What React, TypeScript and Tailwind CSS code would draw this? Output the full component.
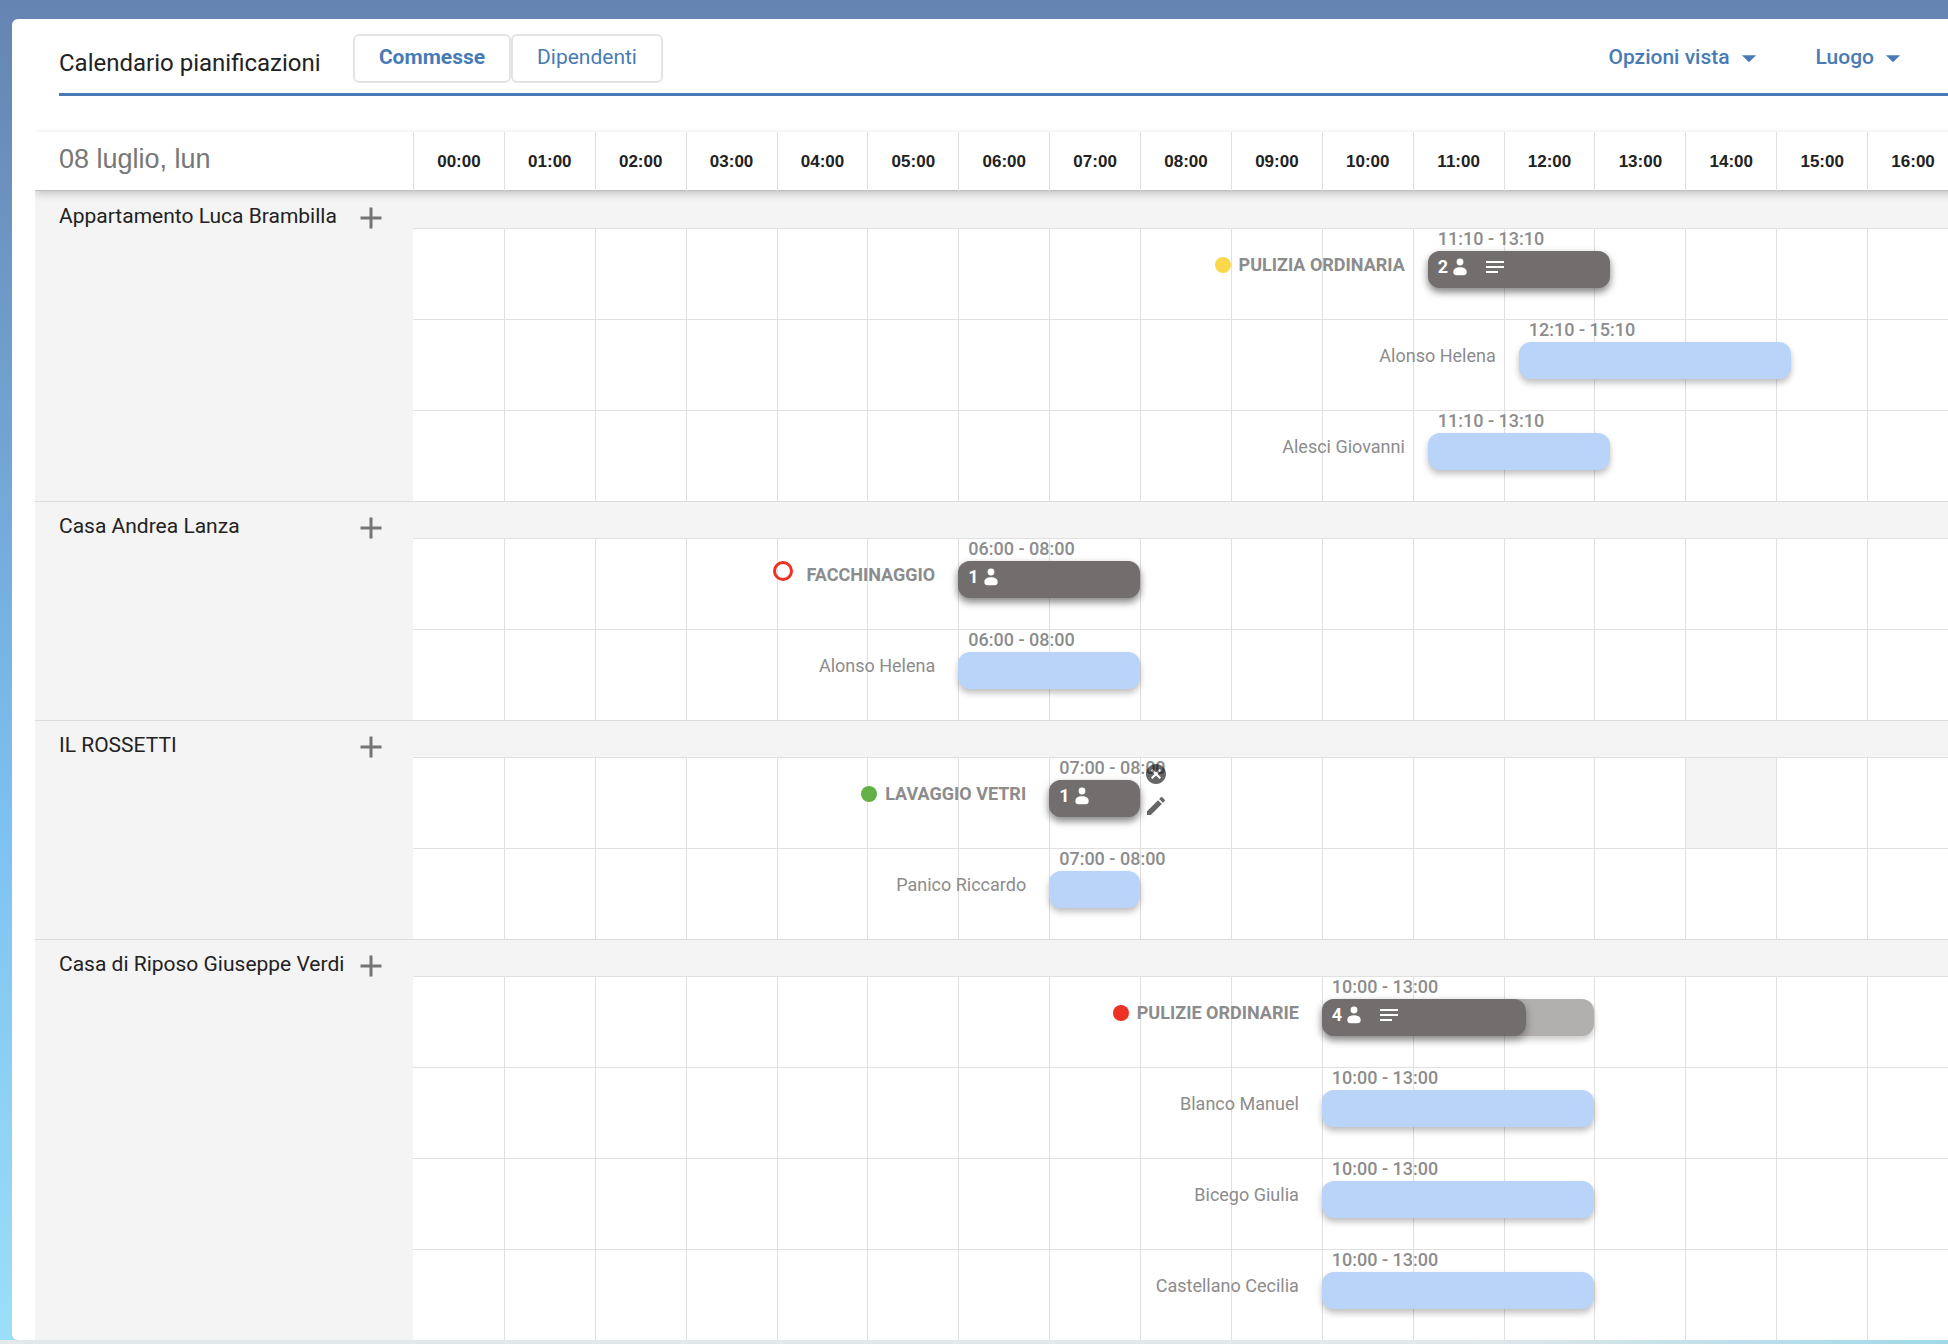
import React from 'react'
import clsx from 'clsx'
import { MdAdd, MdArrowDropDown, MdCancel, MdEdit, MdNotes } from 'react-icons/md'

type Status = 'yellow' | 'green' | 'red' | 'open'

type Shift = {
  label: string
  start: string
  end: string
  status?: Status
  people?: number
  notes?: boolean
  progress?: number
  editable?: boolean
  shadedHour?: number
}

type Site = {
  name: string
  shifts: Shift[]
}

const HOURS = Array.from({ length: 17 }, (_, i) => i)

const SITES: Site[] = [
  {
    name: 'Appartamento Luca Brambilla',
    shifts: [
      { label: 'PULIZIA ORDINARIA', start: '11:10', end: '13:10', status: 'yellow', people: 2, notes: true },
      { label: 'Alonso Helena', start: '12:10', end: '15:10' },
      { label: 'Alesci Giovanni', start: '11:10', end: '13:10' },
    ],
  },
  {
    name: 'Casa Andrea Lanza',
    shifts: [
      { label: 'FACCHINAGGIO', start: '06:00', end: '08:00', status: 'open', people: 1 },
      { label: 'Alonso Helena', start: '06:00', end: '08:00' },
    ],
  },
  {
    name: 'IL ROSSETTI',
    shifts: [
      { label: 'LAVAGGIO VETRI', start: '07:00', end: '08:00', status: 'green', people: 1, editable: true, shadedHour: 14 },
      { label: 'Panico Riccardo', start: '07:00', end: '08:00' },
    ],
  },
  {
    name: 'Casa di Riposo Giuseppe Verdi',
    shifts: [
      { label: 'PULIZIE ORDINARIE', start: '10:00', end: '13:00', status: 'red', people: 4, notes: true, progress: 75 },
      { label: 'Blanco Manuel', start: '10:00', end: '13:00' },
      { label: 'Bicego Giulia', start: '10:00', end: '13:00' },
      { label: 'Castellano Cecilia', start: '10:00', end: '13:00' },
    ],
  },
]

const DOTS: Record<Status, string> = {
  yellow: 'size-4 mr-2 bg-[#fad74b]',
  green: 'size-4 mr-2 bg-[#62b046]',
  red: 'size-4 mr-2 bg-[#eb3223]',
  open: 'size-5 mr-3.5 mb-2 border-[3px] border-[#eb3223]',
}

const toHours = (time: string) => {
  const [h, m] = time.split(':').map(Number)
  return h + m / 60
}

const percent = (hours: number) => `${(hours / HOURS.length) * 100}%`

function PersonIcon() {
  return (
    <svg viewBox="0 0 14 18" className="w-3.5 h-[18px]" fill="currentColor" aria-hidden="true">
      <circle cx="7" cy="4" r="3.4" />
      <path d="M0.3 14C0.3 11 2.8 9.2 7 9.2s6.7 1.8 6.7 4.8c0 2.3-1.3 3.2-3.3 3.2H3.6C1.6 17.2 0.3 16.3 0.3 14z" />
    </svg>
  )
}

function ShiftBar({ shift }: { shift: Shift }) {
  if (!shift.people) {
    return <div className="h-[37px] rounded-xl bg-[#b9d3f9] shadow-[0_4px_6px_rgba(0,0,0,0.25)]" />
  }

  return (
    <div className="h-[37px] rounded-xl bg-[#b2b0ae] shadow-[0_4px_6px_rgba(0,0,0,0.2)]">
      <div
        className="flex h-full items-start rounded-xl bg-[#726e6d] pl-2.5 pt-1 text-lg leading-6 font-bold text-white shadow-[0_4px_8px_rgba(0,0,0,0.35)]"
        style={{ width: `${shift.progress ?? 100}%` }}
      >
        {shift.people}
        <span className="ml-[5px] mt-[3px]">
          <PersonIcon />
        </span>
        {shift.notes && <MdNotes className="ml-4 size-6" />}
      </div>
    </div>
  )
}

function ShiftRow({ shift }: { shift: Shift }) {
  const start = toHours(shift.start)
  const end = toHours(shift.end)

  return (
    <div className="relative h-[91px] border-t border-[#e0e0e0]">
      <div className="grid h-full grid-cols-17">
        {HOURS.map((hour) => (
          <div
            key={hour}
            className={clsx(hour > 0 && 'border-l border-[#e0e0e0]', hour === shift.shadedHour && 'bg-[#f4f4f4]')}
          />
        ))}
      </div>
      <div className="absolute inset-0 flex text-lg text-[#8c8c8c]">
        <div className="flex shrink-0 justify-end pt-6 pr-[23px]" style={{ width: percent(start) }}>
          <div className="flex h-6 items-center whitespace-nowrap leading-6">
            {shift.status && <span className={clsx('rounded-full', DOTS[shift.status])} />}
            <span className={clsx(shift.status && 'font-bold')}>{shift.label}</span>
          </div>
        </div>
        <div className="shrink-0" style={{ width: percent(end - start) }}>
          <div className="h-[22px] pl-2.5 leading-5 font-medium whitespace-nowrap">
            {shift.start} - {shift.end}
          </div>
          <ShiftBar shift={shift} />
        </div>
        {shift.editable && (
          <div className="flex flex-col gap-2 pt-1 pl-1 text-black/60">
            <button type="button" aria-label="Elimina">
              <MdCancel className="size-6" />
            </button>
            <button type="button" aria-label="Modifica">
              <MdEdit className="size-6" />
            </button>
          </div>
        )}
      </div>
    </div>
  )
}

function SiteGroup({ site, first }: { site: Site; first: boolean }) {
  return (
    <section className={clsx('flex border-t bg-[#f4f4f4]', first ? 'border-transparent' : 'border-[#dcdcdc]')}>
      <div className="flex w-[378px] shrink-0 items-start pl-6">
        <h2 className="w-[294px] whitespace-nowrap pt-3 text-[21px] leading-6 text-[#222]">{site.name}</h2>
        <button type="button" aria-label="Aggiungi" className="pt-2 text-[#757575]">
          <MdAdd className="size-9" />
        </button>
      </div>
      <div className="min-w-0 flex-1 pt-9">
        <div className="bg-white">
          {site.shifts.map((shift) => (
            <ShiftRow key={shift.label} shift={shift} />
          ))}
        </div>
      </div>
    </section>
  )
}

function Header() {
  return (
    <header className="ml-6 flex items-center border-b-[3px] border-[#487bb5] pt-[15px] pb-2.5 text-[21px] text-[#487bb5]">
      <h1 className="w-[294px] pt-2 text-2xl text-[#222]">Calendario pianificazioni</h1>
      <div className="flex">
        <button type="button" className="h-[49px] w-[158px] rounded-md border-2 border-[#e4e4e4] pb-0.5 font-bold">
          Commesse
        </button>
        <button type="button" className="h-[49px] w-[152px] rounded-md border-2 border-[#e4e4e4] pb-0.5">
          Dipendenti
        </button>
      </div>
      <nav className="mr-12 ml-auto flex gap-[50px] pb-0.5 font-medium">
        <button type="button" className="flex items-center">
          Opzioni vista
          <MdArrowDropDown className="ml-0.5 size-[34px]" />
        </button>
        <button type="button" className="flex items-center">
          Luogo
          <MdArrowDropDown className="ml-0.5 size-[34px]" />
        </button>
      </nav>
    </header>
  )
}

function HourHeader() {
  return (
    <div className="relative z-10 flex h-[59px] border-b border-[#bdbdbd] bg-white font-['Liberation_Sans',sans-serif] shadow-[0_3px_8px_rgba(0,0,0,0.2)]">
      <div className="w-[378px] shrink-0 pl-6 text-[27px] leading-[54px] text-[#777]">08 luglio, lun</div>
      <div className="grid flex-1 grid-cols-17">
        {HOURS.map((hour) => (
          <div
            key={hour}
            className="border-l border-[#e0e0e0] text-center text-[17px] leading-[59px] font-bold text-[#222]"
          >
            {String(hour).padStart(2, '0')}:00
          </div>
        ))}
      </div>
    </div>
  )
}

export default function App() {
  return (
    <div className="min-h-screen overflow-hidden bg-linear-to-b from-[#6584b1] via-[#7cc0f0] via-60% to-[#9cdff8] pt-[19px] pl-3 font-[Roboto,sans-serif]">
      <main className="-mr-2.5 rounded-md bg-white pl-[23px]">
        <Header />
        <div className="overflow-x-clip pt-9">
          <HourHeader />
          {SITES.map((site, i) => (
            <SiteGroup key={site.name} site={site} first={i === 0} />
          ))}
        </div>
      </main>
      <div className="-ml-3 h-1 bg-linear-to-r from-[#e3e8ea] from-75% to-[#9fd8e9]" />
    </div>
  )
}
